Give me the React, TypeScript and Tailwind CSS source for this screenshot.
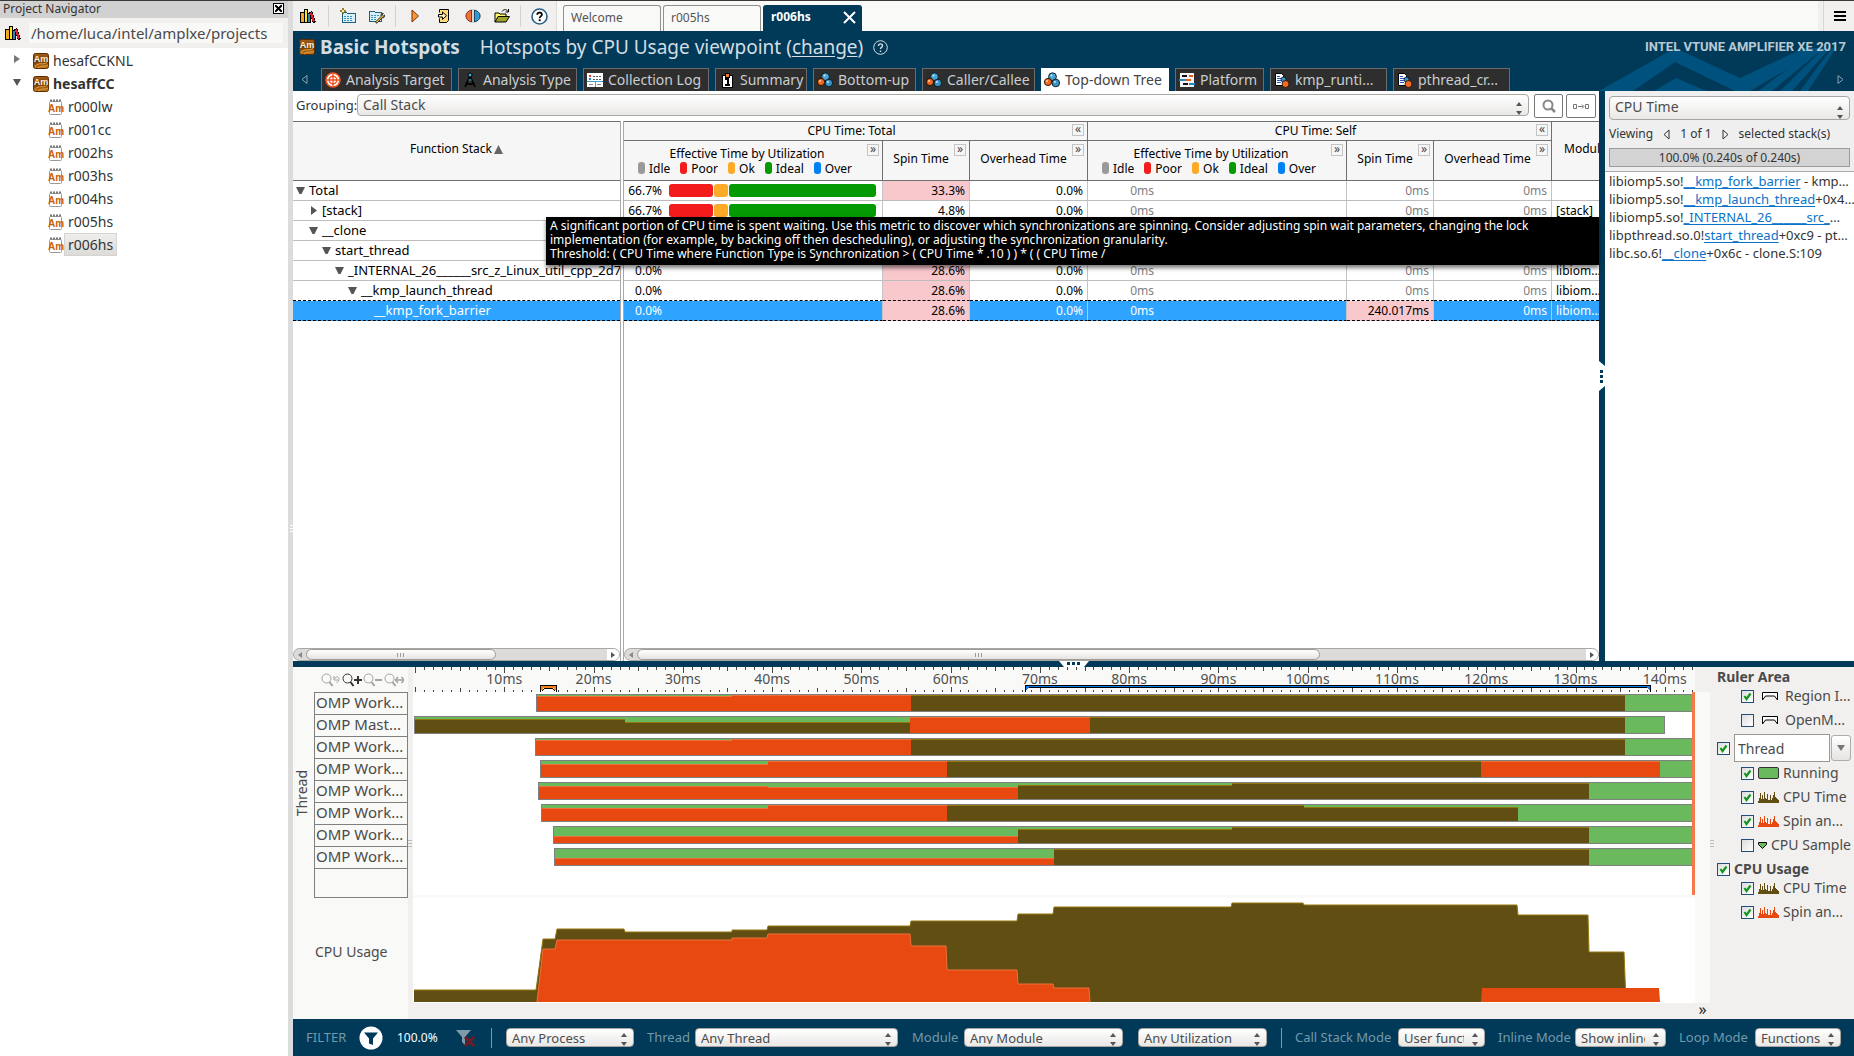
import React from "react";

/* ---------- icons ---------- */

function BooksIcon() {
  return (
    <svg className="h-4 w-4 shrink-0" viewBox="0 0 16 16" shapeRendering="crispEdges" aria-hidden="true">
      <rect x="0" y="4" width="5" height="11" fill="#000" />
      <rect x="1" y="5" width="3" height="9" fill="#f5a623" />
      <rect x="4" y="1" width="4" height="14" fill="#000" />
      <rect x="5" y="2" width="2" height="12" fill="#f8e71c" />
      <rect x="7" y="5" width="4" height="10" fill="#000" />
      <rect x="8" y="6" width="2" height="8" fill="#2f86b4" />
      <polygon points="9,4 12,3 16,14 13,15" fill="#000" />
      <polygon points="10,5 12,4 15,13 13,14" fill="#e0202a" />
    </svg>
  );
}

function NewProjectIcon() {
  return (
    <svg className="h-4 w-4" viewBox="0 0 16 16" shapeRendering="crispEdges" aria-hidden="true">
      <path d="M2.5 4.5h4l1 1h8v9h-13z" fill="#d9f0f8" stroke="#1f5f7d" />
      <path d="M4 8h9M4 10h9M4 12h9" stroke="#3d93b5" strokeDasharray="2 1" />
      <path d="M3 0l1 2 2 1-2 1-1 2-1-2-2-1 2-1z" fill="#ffe98a" stroke="#6b5200" strokeWidth="0.7" />
    </svg>
  );
}

function ProjectPropsIcon() {
  return (
    <svg className="h-4 w-4" viewBox="0 0 16 16" aria-hidden="true">
      <path d="M.5 3.5h5l1 1h6v9H.5z" fill="#d9f0f8" stroke="#1f5f7d" shapeRendering="crispEdges" />
      <path d="M2 7h8M2 9h6M2 11h5" stroke="#3d93b5" strokeDasharray="2 1" shapeRendering="crispEdges" />
      <path d="M7 13.5l5-5c-.6-2 .8-3.300 2.300-3l-1.500 1.700 1.200 1.200 1.600-1.300c.5 1.800-.8 3.100-2.600 2.700l-4.700 5c-1 .8-2-.4-1.300-1.300z" fill="#ffc94d" stroke="#1a1200" strokeWidth="0.9" />
    </svg>
  );
}

function PlayIcon() {
  return (
    <svg className="h-4 w-4" viewBox="0 0 16 16" aria-hidden="true">
      <path d="M5 2v12l6.500-6z" fill="#f39a3b" stroke="#7a2c00" />
    </svg>
  );
}

function AttachIcon() {
  return (
    <svg className="h-4 w-4" viewBox="0 0 16 16" aria-hidden="true">
      <path d="M3.500 4.500v-3h9v11l-2 2h-7v-4" fill="#ffd977" stroke="#000" />
      <path d="M2.500 6.500h4v-2.500l4 3.700-4 3.700V9h-4z" fill="#fff3c4" stroke="#000" />
    </svg>
  );
}

function CompareIcon() {
  return (
    <svg className="h-4 w-4" viewBox="0 0 16 16" aria-hidden="true">
      <path d="M6.500 2v12C-1 12-1 4 6.500 2z" fill="#f0703a" stroke="#5d1c00" strokeWidth="0.8" />
      <path d="M9.500 2v12c7.500-2 7.500-10 0-12z" fill="#2e9bd6" stroke="#00263d" strokeWidth="0.8" />
      <path d="M8 1v14" stroke="#999" strokeWidth="0.600" />
    </svg>
  );
}

function OpenFolderIcon() {
  return (
    <svg className="h-4 w-4" viewBox="0 0 16 16" aria-hidden="true">
      <path d="M1 14V5h4l1 1h6v3" fill="#fff86e" stroke="#000" />
      <path d="M1 14l3-5.500h11.500L12 14z" fill="#a2a42a" stroke="#000" />
      <path d="M8 3.500c2-3 5-2 6 0M14.500 1v3h-3" fill="none" stroke="#000" />
    </svg>
  );
}

function HelpIcon() {
  return (
    <svg className="h-[17px] w-[17px]" viewBox="0 0 17 17" aria-hidden="true">
      <circle cx="8.500" cy="8.500" r="7.500" fill="#fff" stroke="#2a6086" strokeWidth="1.600" />
      <path d="M6.200 6.800c0-3 4.700-3 4.700-.2 0 1.800-2.300 1.800-2.300 3.600" fill="none" stroke="#000" strokeWidth="1.800" />
      <rect x="7.700" y="11.300" width="1.900" height="1.900" fill="#000" />
    </svg>
  );
}

function AmIcon() {
  return (
    <svg className="h-4 w-4 shrink-0" viewBox="0 0 16 16" aria-hidden="true">
      <defs>
        <linearGradient id="am" x1="0" y1="0" x2="0" y2="1">
          <stop offset="0" stopColor="#a8601c" />
          <stop offset="0.5" stopColor="#6a3606" />
          <stop offset="1" stopColor="#c87f20" />
        </linearGradient>
      </defs>
      <rect x="0.500" y="0.500" width="15" height="15" rx="2" fill="url(#am)" stroke="#5a2c02" />
      <path d="M2 13.500c4-5 8-1 12-4M5 15c3-3 6-1 10-3" fill="none" stroke="#f0a83c" strokeWidth="0.900" />
      <text x="8" y="8.500" textAnchor="middle" fontSize="9" fontWeight="700" fontFamily="Liberation Sans, sans-serif" fill="#fff1dc">Am</text>
    </svg>
  );
}

function ResultIcon() {
  return (
    <svg className="h-4 w-4 shrink-0" viewBox="0 0 16 16" aria-hidden="true">
      <rect x="1.500" y="2.500" width="12" height="13" rx="1" fill="#fff" stroke="#9a9a9a" />
      <path d="M2 1.500h12" stroke="#777" strokeWidth="2" strokeDasharray="2 1" />
      <text x="8" y="12.500" textAnchor="middle" fontSize="10" fontWeight="700" fontFamily="Liberation Sans, sans-serif" fill="#c8620a">Am</text>
    </svg>
  );
}

type TabKind = "target" | "compass" | "log" | "info" | "balls" | "platform" | "doc";

function TabIcon({ kind }: { kind: TabKind }) {
  return (
    <svg className="h-4 w-4 shrink-0" viewBox="0 0 16 16" aria-hidden="true">
      {kind === "target" && (
        <>
          <circle cx="8" cy="8" r="7" fill="#fff" stroke="#f0501e" strokeWidth="1.600" />
          <circle cx="8" cy="8" r="3.800" fill="none" stroke="#f0501e" strokeWidth="1.400" />
          <path d="M8 2v12M2 8h12" stroke="#f0501e" strokeWidth="1.300" />
        </>
      )}
      {kind === "compass" && (
        <>
          <path d="M7.500 5L3 15M8.500 5L13 15M3.500 11c3 1.500 6 1.500 9 0" fill="none" stroke="#000" strokeWidth="1.600" />
          <circle cx="8" cy="3" r="2" fill="#3aa7e0" stroke="#000" />
          <path d="M6.500 8h3" stroke="#3aa7e0" />
        </>
      )}
      {kind === "log" && (
        <g shapeRendering="crispEdges">
          <rect x="0" y="1" width="16" height="14" fill="#fff" />
          <path d="M0 9.500h16M8 9v6" stroke="#3f9fd6" />
          <rect x="2" y="3" width="2" height="2" fill="#e04020" />
          <rect x="2" y="6" width="2" height="2" fill="#2b7fc0" />
          <path d="M6 4.500h8M6 7.500h8" stroke="#555" strokeDasharray="2 1" />
          <path d="M2 12.500h4M10 12.500h4" stroke="#888" />
        </g>
      )}
      {kind === "info" && (
        <g shapeRendering="crispEdges">
          <rect x="3" y="3" width="10" height="12" fill="#fff" stroke="#000" />
          <rect x="6" y="1" width="4" height="4" fill="#f47a2a" stroke="#000" />
          <path d="M6 7h3v5M6 12.500h5" fill="none" stroke="#000" strokeWidth="2" />
        </g>
      )}
      {kind === "balls" && (
        <>
          <circle cx="8.500" cy="4.700" r="3.900" fill="#4aa3d0" stroke="#00121c" strokeWidth="0.900" />
          <circle cx="4" cy="10" r="3.600" fill="#f26a21" stroke="#1c0a00" strokeWidth="0.900" />
          <circle cx="11.800" cy="11" r="3.800" fill="#3b92c4" stroke="#00121c" strokeWidth="0.900" />
          <circle cx="3" cy="9" r="1" fill="#ffd3a8" />
          <circle cx="7.500" cy="3.600" r="1" fill="#c9ecff" />
          <circle cx="10.900" cy="10" r="1" fill="#c9ecff" />
        </>
      )}
      {kind === "platform" && (
        <g shapeRendering="crispEdges">
          <rect x="1" y="1" width="14" height="14" fill="#f3f3f3" />
          <rect x="3" y="3" width="5" height="2" fill="#111" />
          <rect x="10" y="3" width="4" height="2" fill="#e8591c" />
          <rect x="0" y="7" width="6" height="2" fill="#2484c0" />
          <rect x="6" y="7" width="6" height="2" fill="#e8591c" />
          <rect x="4" y="11" width="5" height="2" fill="#111" />
          <rect x="10" y="11" width="6" height="2" fill="#2484c0" />
        </g>
      )}
      {kind === "doc" && (
        <>
          <path d="M1.500 1.500h6l2 2v10h-8z" fill="#fff" stroke="#000" />
          <path d="M3 4.500h3M3 6.500h5M3 8.500h4M3 10.500h4" stroke="#2b57c8" />
          <circle cx="9.500" cy="7.500" r="2.500" fill="#3b92c4" stroke="#000" strokeWidth="0.700" />
          <circle cx="11.500" cy="12" r="3.500" fill="#f26a21" stroke="#1c0a00" strokeWidth="0.800" />
        </>
      )}
    </svg>
  );
}

function Magnifier({ mark, dim }: { mark: "undo" | "plus" | "minus" | "fit"; dim?: boolean }) {
  const c = dim ? "#a3a3a3" : "#333";
  return (
    <svg className="h-4 w-5" viewBox="0 0 20 16" fill="none" stroke={c} aria-hidden="true">
      <circle cx="5.500" cy="6.500" r="4.500" />
      <path d="M8.500 10l3 4" strokeWidth="2" />
      {mark === "undo" && <path d="M13 4v4h4M13.500 7c2-4 6-2 4 2l-2 2" />}
      {mark === "plus" && <path d="M12 8h8M16 4v8" strokeWidth="2" />}
      {mark === "minus" && <path d="M12 8h7" strokeWidth="2" />}
      {mark === "fit" && <path d="M12 8h8M14 5l-2.500 3 2.500 3M17.500 5l2.500 3-2.500 3" strokeWidth="1.500" />}
    </svg>
  );
}

function TreeArrow({ open }: { open: boolean }) {
  return (
    <svg className="h-[9px] w-[9px] shrink-0" viewBox="0 0 9 9" aria-hidden="true">
      {open ? <path d="M0 1h9L5.500 8h-2z" fill="#555" /> : <path d="M2 0l6 4.500L2 9z" fill="#555" />}
    </svg>
  );
}

/* ---------- controls ---------- */

function Select({ label, value, className, size = "text-[13px]" }: { label: string; value: string; className: string; size?: string }) {
  return (
    <span className={"relative block shrink-0 " + className}>
      <select
        aria-label={label}
        className={
          "block h-full w-full appearance-none overflow-hidden rounded-[4px] border border-[#a9a6a2] bg-linear-to-b from-white to-[#e9e8e6] pb-0.5 pl-[5px] pr-5 text-[#4c4c4c] " +
          size
        }
      >
        <option>{value}</option>
      </select>
      <svg className="pointer-events-none absolute bottom-0 right-1.5 h-4 w-2" viewBox="0 0 8 16" fill="#555" aria-hidden="true">
        <path d="M1 6l3-4 3 4zM1 11h6l-3 4z" />
      </svg>
    </span>
  );
}

function Check({ id, checked, label }: { id: string; checked?: boolean; label?: string }) {
  return (
    <span className="relative block h-[13px] w-[13px] shrink-0">
      <input
        id={id}
        type="checkbox"
        defaultChecked={checked}
        aria-label={label}
        className="peer block h-full w-full appearance-none border border-[#1f4f7a] bg-linear-to-br from-[#dcdcdc] to-white"
      />
      <svg className="pointer-events-none absolute inset-0 hidden h-full w-full peer-checked:block" viewBox="0 0 13 13" aria-hidden="true">
        <path d="M3.500 6l2 3 4-5.500" fill="none" stroke="#12961c" strokeWidth="2.200" />
      </svg>
    </span>
  );
}

/* ---------- project navigator ---------- */

const RESULTS = ["r000lw", "r001cc", "r002hs", "r003hs", "r004hs", "r005hs", "r006hs"];

function ProjectNavigator() {
  return (
    <aside className="w-72 shrink-0 bg-white text-[#333]">
      <div className="flex h-[17px] items-center justify-between bg-[#d1d1d1] pl-[3px] pr-1 text-xs">
        <h2 className="pb-0.5">Project Navigator</h2>
        <button type="button" aria-label="Close" className="mb-0.5 flex h-[11px] w-[11px] items-center justify-center border border-black bg-white">
          <svg className="h-[7px] w-[7px]" viewBox="0 0 7 7" stroke="#000" strokeWidth="2" aria-hidden="true">
            <path d="M0 0l7 7M7 0L0 7" />
          </svg>
        </button>
      </div>
      <div className="flex h-[30px] items-center gap-2 bg-[#f1f0ee] pl-[5px] pr-[5px]">
        <BooksIcon />
        <span className="h-5 flex-1 bg-[#f8f8f7] pl-[2px] text-[15px] leading-5 text-[#4a4a4a]">/home/luca/intel/amplxe/projects</span>
      </div>
      <ul className="pt-px text-sm">
        <li className="flex h-[23px] items-center pl-[13px]">
          <svg className="mb-1 h-2 w-2" viewBox="0 0 8 8" aria-hidden="true">
            <path d="M1 0l6 4-6 4z" fill="#777" />
          </svg>
          <span className="ml-3 flex items-center gap-1"><AmIcon />hesafCCKNL</span>
        </li>
        <li className="flex h-[23px] items-center pl-[13px] font-bold">
          <svg className="mb-1 h-2 w-2" viewBox="0 0 8 8" aria-hidden="true">
            <path d="M0 1h8L4 8z" fill="#555" />
          </svg>
          <span className="ml-3 flex items-center gap-1"><AmIcon />hesaffCC</span>
        </li>
        {RESULTS.map((r) => (
          <li key={r} className="flex h-[23px] items-center pl-12">
            <ResultIcon />
            <span
              className={
                r === "r006hs"
                  ? "flex h-[23px] items-center border border-[#d6d4d1] bg-linear-to-b from-[#efeeec] to-[#dddbd7] px-[3px]"
                  : "px-1"
              }
            >
              {r}
            </span>
          </li>
        ))}
      </ul>
    </aside>
  );
}

/* ---------- header ---------- */

function Sep() {
  return <span className="h-[22px] w-px bg-[#d4d2cf]" />;
}

function ToolButton({ label, children }: { label: string; children: React.ReactNode }) {
  return (
    <button type="button" aria-label={label} className="flex w-[29px] items-center justify-center">
      {children}
    </button>
  );
}

function TopBar() {
  return (
    <div className="flex h-[30px] bg-[#f9f9f8]">
      <div className="flex w-[264px] shrink-0 items-center border-r border-[#dedcd9] bg-[#f1f0ee]">
        <ToolButton label="Projects"><BooksIcon /></ToolButton>
        <span className="w-1.5" />
        <Sep />
        <span className="w-1" />
        <ToolButton label="New project"><NewProjectIcon /></ToolButton>
        <ToolButton label="Project properties"><ProjectPropsIcon /></ToolButton>
        <span className="w-1" />
        <Sep />
        <span className="w-1" />
        <ToolButton label="Start"><PlayIcon /></ToolButton>
        <ToolButton label="Attach"><AttachIcon /></ToolButton>
        <ToolButton label="Compare"><CompareIcon /></ToolButton>
        <ToolButton label="Open"><OpenFolderIcon /></ToolButton>
        <span className="w-1" />
        <Sep />
        <span className="w-1" />
        <ToolButton label="Help"><HelpIcon /></ToolButton>
      </div>
      <nav className="flex items-end gap-0.5 pl-1.5 text-xs text-[#555]">
        <a href="#welcome" className="flex h-[26px] w-[98px] items-center rounded-t-[3px] border border-b-0 border-[#8f8f8f] pb-0.5 pl-[7px]">Welcome</a>
        <a href="#r005hs" className="flex h-[26px] w-[98px] items-center rounded-t-[3px] border border-b-0 border-[#8f8f8f] pb-0.5 pl-[7px]">r005hs</a>
        <a href="#r006hs" className="flex h-[26px] w-[99px] items-center justify-between rounded-t-[3px] bg-[#003a58] pb-0.5 pl-2 pr-1.5 font-bold text-white">
          r006hs
          <svg className="h-[13px] w-[13px]" viewBox="0 0 13 13" stroke="#fff" strokeWidth="2" aria-hidden="true">
            <path d="M1 1l11 11M12 1L1 12" />
          </svg>
        </a>
      </nav>
      <span className="flex-1" />
      <div className="flex w-9 items-center justify-between bg-[#f1f0ee] pl-[5px] pr-2">
        <span className="h-full w-px bg-[#d9d7d4]" />
        <button type="button" aria-label="Menu" className="flex w-3 flex-col gap-[2px]">
          <span className="h-[2px] bg-black" />
          <span className="h-[2px] bg-black" />
          <span className="h-[2px] bg-black" />
        </button>
      </div>
    </div>
  );
}

const VIEW_TABS: { label: string; kind: TabKind; width: string; active?: boolean }[] = [
  { label: "Analysis Target", kind: "target", width: "w-[131px]" },
  { label: "Analysis Type", kind: "compass", width: "w-[119px]" },
  { label: "Collection Log", kind: "log", width: "w-[126px]" },
  { label: "Summary", kind: "info", width: "w-[92px]" },
  { label: "Bottom-up", kind: "balls", width: "w-[103px]" },
  { label: "Caller/Callee", kind: "balls", width: "w-[113px]" },
  { label: "Top-down Tree", kind: "balls", width: "w-[128px]", active: true },
  { label: "Platform", kind: "platform", width: "w-[89px]" },
  { label: "kmp_runti...", kind: "doc", width: "w-[117px]" },
  { label: "pthread_cr...", kind: "doc", width: "w-[117px]" },
];

function Banner() {
  return (
    <header className="relative overflow-hidden bg-[#003a58]">
      <svg className="absolute bottom-0 right-0 h-[46px] w-[256px]" viewBox="0 0 256 46" fill="#00517d" aria-hidden="true">
        <path d="M1 46L77 3l65 30 64-30h20L152 46h-15L77 17 35 46z" />
        <path d="M56 46l22-13 31 13z" />
        <path d="M160 46l58-43h8l-52 43zM182 46l44-43h6l-38 43zM202 46l32-43h4l-28 43z" />
      </svg>
      <div className="relative mb-[5px] flex h-8 items-center pl-1.5 pr-2 text-[19px] text-[#d4dde3]">
        <AmIcon />
        <h1 className="ml-[5px] font-bold leading-8">Basic Hotspots</h1>
        <p className="ml-5 leading-8">
          Hotspots by CPU Usage viewpoint (<a href="#change" className="underline underline-offset-2">change</a>)
        </p>
        <svg className="ml-2.5 h-[15px] w-[15px]" viewBox="0 0 15 15" fill="none" stroke="#d4dde3" aria-hidden="true">
          <circle cx="7.500" cy="7.500" r="6.800" />
          <path d="M5.500 6c0-2.800 4-2.800 4-.2 0 1.500-2 1.600-2 3.200M7.500 10.500v1.500" strokeWidth="1.400" />
        </svg>
        <span className="flex-1" />
        <span className="whitespace-nowrap font-['Roboto',sans-serif] text-[13px] font-bold text-[#b9c9d3]">INTEL VTUNE AMPLIFIER XE 2017</span>
      </div>
      <div className="relative flex h-[23px] items-stretch gap-1.5 text-sm text-[#c9cdd0]">
        <button type="button" aria-label="Scroll tabs left" className="flex w-[22px] items-center justify-center">
          <svg className="h-[9px] w-[7px]" viewBox="0 0 7 9" fill="none" stroke="#8ca1ae" aria-hidden="true"><path d="M6 .5v8l-5-4z" /></svg>
        </button>
        {VIEW_TABS.map((t) => (
          <a
            key={t.label}
            href={"#" + t.label}
            className={
              "flex shrink-0 items-center gap-[5px] whitespace-nowrap pl-[3px] leading-5 " +
              t.width +
              (t.active ? " bg-white text-[#444]" : " border border-b-0 border-[#6b6b6b] bg-[#2e2e2e]")
            }
          >
            <TabIcon kind={t.kind} />
            {t.label}
          </a>
        ))}
        <span className="flex-1" />
        <button type="button" aria-label="Scroll tabs right" className="mr-2 flex w-3 items-center justify-center">
          <svg className="h-[9px] w-[7px]" viewBox="0 0 7 9" fill="none" stroke="#8ca1ae" aria-hidden="true"><path d="M1 .5v8l5-4z" /></svg>
        </button>
      </div>
    </header>
  );
}

/* ---------- hotspot grid ---------- */

type Row = {
  name: string;
  depth: number;
  open?: boolean;
  total?: string;
  bars?: boolean;
  spin?: string;
  hot?: boolean;
  self?: string;
  selfSpin?: string;
  module?: string;
  selected?: boolean;
  covered?: boolean;
};

const ROWS: Row[] = [
  { name: "Total", depth: 0, open: true, total: "66.7%", bars: true, spin: "33.3%", hot: true, module: "" },
  { name: "[stack]", depth: 1, open: false, total: "66.7%", bars: true, spin: "4.8%", module: "[stack]" },
  { name: "__clone", depth: 1, open: true, covered: true },
  { name: "start_thread", depth: 2, open: true, covered: true },
  { name: "_INTERNAL_26______src_z_Linux_util_cpp_2d7", depth: 3, open: true, total: "0.0%", spin: "28.6%", hot: true, module: "libiom..." },
  { name: "__kmp_launch_thread", depth: 4, open: true, total: "0.0%", spin: "28.6%", hot: true, module: "libiom..." },
  { name: "__kmp_fork_barrier", depth: 5, total: "0.0%", spin: "28.6%", hot: true, selfSpin: "240.017ms", module: "libiom...", selected: true },
];

function rowLine(i: number) {
  return i >= 5 ? " border-b [border-bottom-style:dashed] border-b-black" : " border-b border-b-[#bdbdbd]";
}

function Expand({ sign, className }: { sign: string; className: string }) {
  return (
    <button
      type="button"
      aria-label="Toggle columns"
      className={"absolute right-[3px] flex h-3 w-3 items-center justify-center border border-[#c4c4c4] text-xs leading-none text-[#444] " + className}
    >
      <span className="-mt-0.5">{sign}</span>
    </button>
  );
}

const LEGEND = [
  { label: "Idle", color: "bg-[#9a9a9a]" },
  { label: "Poor", color: "bg-[#f21c1c]" },
  { label: "Ok", color: "bg-[#fbab25]" },
  { label: "Ideal", color: "bg-[#049a04]" },
  { label: "Over", color: "bg-[#0080f5]" },
];

function UtilizationHead() {
  return (
    <th className="relative border-b border-r border-[#6f6f6f] p-0 pr-3 font-normal">
      <div className="leading-[15px]">Effective Time by Utilization</div>
      <div className="flex justify-center gap-2.5 pr-1 leading-[15px]">
        {LEGEND.map((l) => (
          <span key={l.label} className="flex items-center gap-1">
            <span className={"h-3 w-[7px] rounded-[3px] " + l.color} />
            {l.label}
          </span>
        ))}
      </div>
      <Expand sign="»" className="top-[3px]" />
    </th>
  );
}

function PlainHead({ label }: { label: string }) {
  return (
    <th className="relative border-b border-r border-[#6f6f6f] p-0 pb-1 pr-2.5 font-normal">
      {label}
      <Expand sign="»" className="top-[3px]" />
    </th>
  );
}

function ScrollBar({ thumb }: { thumb: string }) {
  return (
    <div className="mt-auto flex h-[13px] w-full rounded-full border border-[#aaa7a3] bg-[#dcdbda]">
      <button type="button" aria-label="Scroll left" className="flex w-3 items-center justify-center">
        <svg className="h-[6px] w-1" viewBox="0 0 4 6" aria-hidden="true"><path d="M4 0v6L0 3z" fill="#888" /></svg>
      </button>
      <div className="flex flex-1">
        <div className={"flex items-center justify-center gap-[2px] rounded-full border border-[#9e9b97] bg-linear-to-b from-white to-[#e6e4e2] " + thumb}>
          <span className="h-1 w-px bg-[#999]" />
          <span className="h-1 w-px bg-[#999]" />
          <span className="h-1 w-px bg-[#999]" />
        </div>
      </div>
      <button type="button" aria-label="Scroll right" className="flex w-3 items-center justify-center rounded-r-full bg-white">
        <svg className="h-[6px] w-1" viewBox="0 0 4 6" aria-hidden="true"><path d="M0 0v6l4-3z" fill="#555" /></svg>
      </button>
    </div>
  );
}

function FunctionPane() {
  return (
    <div className="flex w-[328px] shrink-0 flex-col overflow-hidden border-r border-[#a8a8a8]">
      <table className="w-full table-fixed border-separate border-spacing-0 text-[13px]">
        <thead>
          <tr className="h-[60px] bg-[#f6f6f6]">
            <th className="border-y border-[#6f6f6f] p-0 pb-1 text-xs font-normal">
              <span className="inline-flex items-center gap-0.5">
                Function Stack
                <svg className="h-[9px] w-[9px]" viewBox="0 0 9 9" aria-hidden="true"><path d="M4.500 0L9 9H0z" fill="#666" /></svg>
              </span>
            </th>
          </tr>
        </thead>
        <tbody>
          {ROWS.map((r, i) => (
            <tr key={r.name} className={r.selected ? "h-5 bg-[#2ea3ff] text-white" : "h-5"}>
              <td className={"overflow-hidden p-0" + rowLine(i)}>
                <div className="flex h-[19px] items-center gap-1 whitespace-nowrap leading-[19px]" style={{ paddingLeft: 3 + r.depth * 13 }}>
                  {r.open === undefined ? <span className="w-[9px] shrink-0" /> : <TreeArrow open={r.open} />}
                  {r.name}
                </div>
              </td>
            </tr>
          ))}
        </tbody>
      </table>
      <ScrollBar thumb="w-[63%]" />
    </div>
  );
}

function MetricsPane() {
  return (
    <div className="flex min-w-0 flex-1 flex-col overflow-hidden border-l border-[#a8a8a8]">
      <table className="w-full table-fixed border-separate border-spacing-0 text-xs">
        <colgroup>
          <col className="w-[259px]" />
          <col className="w-[87px]" />
          <col className="w-[118px]" />
          <col className="w-[259px]" />
          <col className="w-[87px]" />
          <col className="w-[118px]" />
          <col />
        </colgroup>
        <thead className="bg-[#f6f6f6]">
          <tr className="h-5">
            <th colSpan={3} className="relative border-b border-r border-t border-[#6f6f6f] p-0 pr-2 font-normal leading-4">
              CPU Time: Total
              <Expand sign="«" className="top-[2px]" />
            </th>
            <th colSpan={3} className="relative border-b border-r border-t border-[#6f6f6f] p-0 pr-2 font-normal leading-4">
              CPU Time: Self
              <Expand sign="«" className="top-[2px]" />
            </th>
            <th rowSpan={2} className="overflow-hidden border-y border-[#6f6f6f] p-0 pb-1 pl-3 text-left font-normal">Module</th>
          </tr>
          <tr className="h-10">
            <UtilizationHead />
            <PlainHead label="Spin Time" />
            <PlainHead label="Overhead Time" />
            <UtilizationHead />
            <PlainHead label="Spin Time" />
            <PlainHead label="Overhead Time" />
          </tr>
        </thead>
        <tbody>
          {ROWS.map((r, i) => {
            const line = rowLine(i);
            const cell = "h-5 p-0 text-right leading-[19px] border-r border-r-[#c4c4c4]" + line;
            const dim = r.selected ? "" : " text-[#808080]";
            return (
              <tr key={r.name} className={r.selected ? "bg-[#2ea3ff] text-white" : ""}>
                <td className={cell}>
                  <div className="flex h-[19px] items-center gap-[7px]">
                    <span className="w-[38px]">{r.total}</span>
                    {r.bars && (
                      <span className="flex h-[13px] w-[207px] gap-px">
                        <span className="w-11 rounded-[3px] bg-[#f21c1c]" />
                        <span className="w-3.5 rounded-[3px] bg-[#fbab25]" />
                        <span className="flex-1 rounded-[3px] bg-[#049a04]" />
                      </span>
                    )}
                  </div>
                </td>
                <td className={cell + " pr-1" + (r.hot ? " bg-[#f8c8cd] text-black" : "")}>{r.spin}</td>
                <td className={cell + " pr-1"}>{r.covered ? "" : "0.0%"}</td>
                <td className={cell + dim}><div className="w-[66px]">{r.covered ? "" : "0ms"}</div></td>
                <td className={cell + " pr-1" + (r.selfSpin ? " bg-[#f8c8cd] text-black" : dim)}>{r.covered ? "" : r.selfSpin || "0ms"}</td>
                <td className={cell + " pr-1" + dim}>{r.covered ? "" : "0ms"}</td>
                <td className={"overflow-hidden whitespace-nowrap p-0 pl-1 leading-[19px]" + line}>{r.module}</td>
              </tr>
            );
          })}
        </tbody>
      </table>
      <ScrollBar thumb="w-[72%]" />
    </div>
  );
}

function Grid() {
  return (
    <main className="relative flex min-w-0 flex-1 flex-col bg-white text-black">
      <div className="flex h-[30px] items-center pl-[3px] pr-[3px]">
        <span className="w-[61px] text-[13px] text-[#333]">Grouping:</span>
        <Select label="Grouping" value="Call Stack" className="mb-0.5 h-[22px] flex-1" size="text-sm" />
        <button type="button" aria-label="Search" className="ml-[5px] flex h-6 w-[29px] items-center justify-center rounded-[2px] border border-[#777]">
          <svg className="h-[14px] w-[14px]" viewBox="0 0 14 14" fill="none" stroke="#888" strokeWidth="2" aria-hidden="true">
            <circle cx="6" cy="6" r="4.500" /><path d="M9 9l4 4" strokeWidth="2.500" />
          </svg>
        </button>
        <button type="button" aria-label="Fit columns" className="ml-[3px] flex h-6 w-[30px] items-center justify-center rounded-[2px] border border-[#777]">
          <svg className="h-[7px] w-4" viewBox="0 0 16 7" fill="none" stroke="#777" aria-hidden="true">
            <path d="M.5 1.500h3v4h-3zM12.500 1.500h3v4h-3zM5 3.500h5M9 1.500l2 2-2 2" />
          </svg>
        </button>
      </div>
      <div className="flex min-h-0 flex-1 gap-[2px]">
        <FunctionPane />
        <MetricsPane />
      </div>
      <div role="tooltip" className="absolute left-[253px] right-0 top-[126px] overflow-hidden whitespace-nowrap bg-black pb-1 pl-1 pt-[2px] text-xs leading-[14px] text-white shadow-[0_3px_4px_rgba(0,0,0,0.5)]">
        A significant portion of CPU time is spent waiting. Use this metric to discover which synchronizations are spinning. Consider adjusting spin wait parameters, changing the lock
        <br />
        implementation (for example, by backing off then descheduling), or adjusting the synchronization granularity.
        <br />
        Threshold: ( CPU Time where Function Type is Synchronization &gt; ( CPU Time * .10 ) ) * ( ( CPU Time /
      </div>
    </main>
  );
}

/* ---------- stack panel ---------- */

const STACK = [
  { lib: "libiomp5.so!", fn: "__kmp_fork_barrier", rest: " - kmp…" },
  { lib: "libiomp5.so!", fn: "__kmp_launch_thread", rest: "+0x4…" },
  { lib: "libiomp5.so!", fn: "_INTERNAL_26______src_", rest: "…" },
  { lib: "libpthread.so.0!", fn: "start_thread", rest: "+0xc9 - pt…" },
  { lib: "libc.so.6!", fn: "__clone", rest: "+0x6c - clone.S:109" },
];

function StackPanel() {
  return (
    <aside className="w-[249px] shrink-0 bg-white text-[#333]">
      <div className="border-b border-[#a9a9a9] bg-[#efefef] px-1 pb-1 pt-[5px]">
        <Select label="Stack metric" value="CPU Time" className="h-6 w-full" size="text-sm" />
        <div className="flex h-7 items-center text-xs">
          Viewing
          <svg className="ml-2.5 h-[11px] w-[7px]" viewBox="0 0 7 11" fill="none" stroke="#333" aria-hidden="true"><path d="M6 1v9L1 5.500z" /></svg>
          <span className="mx-2.5">1 of 1</span>
          <svg className="h-[11px] w-[7px]" viewBox="0 0 7 11" fill="none" stroke="#333" aria-hidden="true"><path d="M1 1v9l5-4.500z" /></svg>
          <span className="ml-2.5">selected stack(s)</span>
        </div>
        <div className="flex h-[19px] items-center justify-center border border-[#9b9b9b] bg-[#d4d4d4] text-xs">100.0% (0.240s of 0.240s)</div>
      </div>
      <ul className="overflow-hidden whitespace-nowrap pl-1 text-[13px] leading-[18px]">
        {STACK.map((s) => (
          <li key={s.fn}>
            {s.lib}
            <a href={"#" + s.fn} className="text-[#0a72c8] underline underline-offset-2">{s.fn}</a>
            {s.rest}
          </li>
        ))}
      </ul>
    </aside>
  );
}

/* ---------- timeline ---------- */

const SPAN = 1282;
const MS = 8.927;
const ORANGE = "#e84910";
const BROWN = "#604e13";
const GREEN = "#6bb95d";

/* Each segment: end x, colour, gap above the fill. All x values are in chart units. */
type Seg = [number, string, number];
const THREADS: { name: string; start: number; end: number; segs: Seg[] }[] = [
  { name: "OMP Work...", start: 123, end: 1282, segs: [[319, ORANGE, 2], [498, ORANGE, 1], [1212, BROWN, 1]] },
  { name: "OMP Mast...", start: 1, end: 1252, segs: [[212, BROWN, 3], [497, BROWN, 6], [677, ORANGE, 1], [1212, BROWN, 1]] },
  { name: "OMP Work...", start: 122, end: 1282, segs: [[319, ORANGE, 2], [498, ORANGE, 1], [1212, BROWN, 1]] },
  { name: "OMP Work...", start: 127, end: 1282, segs: [[355, ORANGE, 4], [534, ORANGE, 1], [1068, BROWN, 1], [1247, ORANGE, 1]] },
  { name: "OMP Work...", start: 125, end: 1282, segs: [[355, ORANGE, 4], [605, ORANGE, 5], [819, BROWN, 3], [1176, BROWN, 1]] },
  { name: "OMP Work...", start: 128, end: 1282, segs: [[355, ORANGE, 4], [534, ORANGE, 1], [891, BROWN, 1], [1105, BROWN, 3]] },
  { name: "OMP Work...", start: 140, end: 1282, segs: [[605, ORANGE, 10], [819, BROWN, 3], [1176, BROWN, 1]] },
  { name: "OMP Work...", start: 141, end: 1282, segs: [[641, ORANGE, 10], [1176, BROWN, 1]] },
];

function ThreadTrack({ start, end, segs }: { start: number; end: number; segs: Seg[] }) {
  return (
    <svg className="block h-[22px] w-full" viewBox={"0 0 " + SPAN + " 22"} preserveAspectRatio="none" shapeRendering="crispEdges" aria-hidden="true">
      <rect x={start} y="2" width={end - start} height="18" fill="#808080" />
      <rect x={start + 1} y="3" width={end - start - 2 + (end === SPAN ? 2 : 0)} height="16" fill={GREEN} />
      {segs.map(([to, color, gap], i) => {
        const from = i === 0 ? start + 1 : segs[i - 1][0];
        return (
          <g key={to}>
            <rect x={from} y={2 + gap} width={to - from} height={17 - gap} fill={color} />
            <rect x={from} y={2 + gap} width={to - from} height="1" fill={color === ORANGE ? "#f0703c" : "#94770f"} />
          </g>
        );
      })}
    </svg>
  );
}

function Ruler() {
  const ticks = Array.from({ length: 144 }, (_, i) => i);
  return (
    <div className="relative h-[25px] w-full bg-[#f9f9f8] text-[#4f4f4f]">
      <svg className="absolute inset-0 h-full w-full" viewBox={"0 0 " + SPAN + " 25"} preserveAspectRatio="none" shapeRendering="crispEdges" aria-hidden="true">
        {ticks.map((t) => {
          const len = t % 10 === 0 ? 6 : t % 5 === 0 ? 4 : 3;
          const x = Math.round(2 + t * MS);
          return (
            <g key={t} fill="#444">
              <rect x={x} y="0" width="1" height={len} />
              <rect x={x} y={25 - (len === 6 ? 5 : len === 4 ? 4 : 2)} width="1" height="5" />
            </g>
          );
        })}
      </svg>
      {Array.from({ length: 14 }, (_, i) => (i + 1) * 10).map((t) => (
        <span
          key={t}
          className="absolute top-[2px] -translate-x-1/2 text-sm leading-5"
          style={{ left: ((2 + t * MS) / SPAN) * 100 + "%" }}
        >
          {t}ms
        </span>
      ))}
      <svg className="absolute inset-0 h-full w-full" viewBox={"0 0 " + SPAN + " 25"} preserveAspectRatio="none" shapeRendering="crispEdges" aria-hidden="true">
        <rect x="127" y="18" width="17" height="7" fill="#f9f9f8" />
        <path d="M127 18h17v7h-1v-6h-15v6h-1z" fill="#000" />
        <rect x="128" y="19" width="15" height="2" fill="#f5841f" />
        <path d="M128 21h2v2h-2zM141 21h2v2h-2z" fill="#f5841f" />
        <path d="M131 21h9v1h-9zM130 22h1v1h-1zM140 22h1v1h-1zM129 23h1v1h-1zM141 23h1v1h-1z" fill="#000" />
        <rect x="612" y="18" width="626" height="3" fill="#000" />
        <rect x="613" y="19" width="624" height="1" fill="#0f7cf0" />
        <rect x="612" y="18" width="1" height="7" fill="#000" />
        <rect x="1237" y="18" width="1" height="7" fill="#000" />
        <path d="M613 19h4l-4 5zM1237 19h-4l4 5z" fill="#0f7cf0" />
      </svg>
    </div>
  );
}

function UsageChart() {
  const cpu =
    "1,92 123,92 130,41 142,41 144,31 211,31 212,34 319,34 319,32 354,32 355,28 497,28 498,23 604,23 605,16 640,16 641,9 818,9 819,5 890,5 891,7 1104,7 1105,17 1175,17 1176,54 1211,54 1213,104";
  const spin =
    "124,104 130,51 142,51 144,42 319,42 319,40 354,40 355,36 497,36 498,48 533,48 534,72 604,72 605,86 640,86 641,90 676,90 677,104";
  return (
    <svg className="block h-[105px] w-full bg-white" viewBox={"0 0 " + SPAN + " 105"} preserveAspectRatio="none" role="img" aria-label="CPU usage over time">
      <polygon points={cpu + " 1,104"} fill={BROWN} />
      <polyline points={cpu} fill="none" stroke="#94770f" />
      <polygon points={spin} fill={ORANGE} />
      <polyline points={spin} fill="none" stroke="#f0703c" />
      <polygon points="1068,104 1069,90 1246,90 1247,104" fill={ORANGE} />
    </svg>
  );
}

function HistIcon({ color }: { color: string }) {
  return (
    <svg className="h-[11px] w-[21px]" viewBox="0 0 21 11" shapeRendering="crispEdges" fill={color} aria-hidden="true">
      <path d="M0 11V9h1V6h1V1h1v6h1V3h1v4h1V0h1v6h1V7h1V2h1v6h1V8h1V3h1v5h1V6h1V3h1V0h1v5h1V6h1V7h1v1h1v3z" />
    </svg>
  );
}

function RegionIcon() {
  return (
    <svg className="ml-1 h-2 w-4" viewBox="0 0 16 8" fill="#fff" stroke="#000" aria-hidden="true">
      <path d="M.5 8V.5h15V8l-3-4h-9z" />
    </svg>
  );
}

function LegendRow({ id, label, checked, icon, gap = "gap-1" }: { id: string; label: string; checked?: boolean; icon: React.ReactNode; gap?: string }) {
  return (
    <li className="flex h-6 items-center pl-[27px]">
      <Check id={id} checked={checked} />
      <label htmlFor={id} className={"ml-1 flex items-center whitespace-nowrap " + gap}>
        {icon}
        {label}
      </label>
    </li>
  );
}

function Legend() {
  return (
    <aside className="w-[140px] shrink-0 overflow-hidden text-sm leading-5 text-[#4a4a4a]">
      <h3 className="h-[17px] pl-[3px] font-bold">Ruler Area</h3>
      <ul>
        <LegendRow id="region" label="Region I..." checked icon={<RegionIcon />} gap="gap-[7px]" />
        <LegendRow id="openmp" label="OpenM..." icon={<RegionIcon />} gap="gap-[7px]" />
      </ul>
      <div className="mt-0.5 flex h-7 items-center pl-[3px]">
        <Check id="thread" checked label="Show thread tracks" />
        <input aria-label="Grouping level" defaultValue="Thread" className="ml-1 h-7 w-24 border border-[#9b9894] bg-white px-[3px] text-sm" />
        <button type="button" aria-label="Choose grouping level" className="ml-px flex h-[26px] w-5 items-center justify-center rounded-[3px] border border-[#b0ada9] bg-linear-to-b from-white to-[#e6e4e2]">
          <svg className="h-[6px] w-2" viewBox="0 0 8 6" aria-hidden="true"><path d="M0 0h8L4 6z" fill="#777" /></svg>
        </button>
      </div>
      <ul className="-mt-px">
        <LegendRow id="running" label="Running" checked icon={<span className="h-3 w-[21px] rounded-[2px] border border-[#333] bg-[#6bb95d]" />} />
        <LegendRow id="cpu" label="CPU Time" checked icon={<HistIcon color={BROWN} />} />
        <LegendRow id="spin" label="Spin an..." checked icon={<HistIcon color={ORANGE} />} />
        <LegendRow
          id="sample"
          label="CPU Sample"
          icon={
            <svg className="h-[7px] w-[9px]" viewBox="0 0 9 7" aria-hidden="true">
              <path d="M.5.5h8v2l-4 4-4-4z" fill="#6bb95d" stroke="#000" />
            </svg>
          }
        />
      </ul>
      <div className="flex h-6 items-center pl-[3px]">
        <Check id="usage" checked />
        <label htmlFor="usage" className="ml-1 font-bold">CPU Usage</label>
      </div>
      <ul className="-mt-[5px]">
        <LegendRow id="usage-cpu" label="CPU Time" checked icon={<HistIcon color={BROWN} />} />
        <LegendRow id="usage-spin" label="Spin an..." checked icon={<HistIcon color={ORANGE} />} />
      </ul>
    </aside>
  );
}

function Grip() {
  return (
    <div className="flex w-1 shrink-0 flex-col items-center justify-center gap-[2px] bg-[#f1f0ee]">
      <span className="h-px w-full bg-[#bbb]" />
      <span className="h-px w-full bg-[#bbb]" />
      <span className="h-px w-full bg-[#bbb]" />
    </div>
  );
}

function Timeline() {
  return (
    <section className="flex h-[352px] shrink-0 bg-[#f1f0ee] text-[#4a4a4a]">
      <div className="flex w-[115px] shrink-0 flex-col bg-[#f9f9f8]">
        <div className="flex h-[25px] items-center pl-7">
          <button type="button" aria-label="Undo zoom" className="w-[21px]"><Magnifier mark="undo" dim /></button>
          <button type="button" aria-label="Zoom in" className="w-[21px]"><Magnifier mark="plus" /></button>
          <button type="button" aria-label="Zoom out" className="w-[21px]"><Magnifier mark="minus" dim /></button>
          <button type="button" aria-label="Zoom to fit" className="w-[21px]"><Magnifier mark="fit" dim /></button>
        </div>
        <div className="flex h-[206px]">
          <div className="flex w-[21px] items-center justify-center pb-1 pr-1">
            <span className="rotate-180 text-sm [writing-mode:vertical-rl]">Thread</span>
          </div>
          <ul className="flex-1 border border-[#808080] text-[15px]">
            {THREADS.map((t, i) => (
              <li key={i} className="h-[22px] whitespace-nowrap border-b border-[#808080] pl-px leading-[19px]">{t.name}</li>
            ))}
          </ul>
        </div>
        <div className="flex flex-1 items-center pb-3.5 pl-[22px] text-sm">CPU Usage</div>
      </div>
      <Grip />
      <div className="flex min-w-0 flex-1 flex-col pl-px">
        <Ruler />
        <div className="relative h-[203px] bg-white">
          {THREADS.map((t, i) => (
            <ThreadTrack key={i} start={t.start} end={t.end} segs={t.segs} />
          ))}
          <span className="absolute inset-y-0 right-0 w-[3px] bg-[#f4794b]" />
        </div>
        <div className="h-[3px] bg-[#f9f9f8]" />
        <UsageChart />
      </div>
      <div className="flex w-[15px] shrink-0 flex-col">
        <div className="mt-[25px] flex-1 bg-[#f9f9f8]" />
        <button type="button" aria-label="More" className="flex h-4 items-center justify-center pb-1 text-base leading-none text-[#222]">»</button>
      </div>
      <Grip />
      <Legend />
    </section>
  );
}

/* ---------- filter bar ---------- */

function FilterBar() {
  return (
    <footer className="flex h-[37px] shrink-0 items-center bg-[#003a58] pl-[13px] text-[13px] text-[#7399ab]">
      <span className="w-[53px]">FILTER</span>
      <svg className="h-6 w-6" viewBox="0 0 24 24" aria-hidden="true">
        <circle cx="12" cy="12" r="11.500" fill="#fff" />
        <path d="M5 6.500h14l-5 6V19l-4-1.500v-5z" fill="#003a58" />
      </svg>
      <span className="ml-3.5 w-[59px] text-xs text-white">100.0%</span>
      <button type="button" aria-label="Clear filter" className="w-[35px]">
        <svg className="h-5 w-5" viewBox="0 0 20 20" aria-hidden="true">
          <path d="M0 2h15L9 9v8l-3-3V9z" fill="#7f9aa8" />
          <path d="M9 9l9 9M18 9l-9 9" stroke="#701c26" strokeWidth="3" />
        </svg>
      </button>
      <span className="h-5 w-px bg-[#7d97a6]" />
      <Select label="Process" value="Any Process" className="ml-3.5 h-[19px] w-32" />
      <label className="w-[61px] pl-[13px]">Thread</label>
      <Select label="Thread" value="Any Thread" className="h-[19px] w-[203px]" />
      <label className="w-[66px] pl-3.5">Module</label>
      <Select label="Module" value="Any Module" className="h-[19px] w-[159px]" />
      <Select label="Utilization" value="Any Utilization" className="ml-[15px] h-[19px] w-[129px]" />
      <span className="ml-3.5 h-5 w-px bg-[#7d97a6]" />
      <label className="w-[116px] whitespace-nowrap pl-[13px]">Call Stack Mode</label>
      <Select label="Call stack mode" value="User functions + 1" className="h-[19px] w-[87px]" />
      <label className="w-[90px] whitespace-nowrap pl-[13px]">Inline Mode</label>
      <Select label="Inline mode" value="Show inline functions" className="h-[19px] w-[91px]" />
      <label className="w-[89px] whitespace-nowrap pl-[13px]">Loop Mode</label>
      <Select label="Loop mode" value="Functions" className="h-[19px] w-[86px]" />
    </footer>
  );
}

/* ---------- page ---------- */

export default function App() {
  return (
    <div className="flex min-h-screen border-t border-[#3b3735] bg-white font-['Noto_Sans',sans-serif]">
      <ProjectNavigator />
      <div className="flex w-[5px] shrink-0 flex-col items-end justify-center gap-[2px] bg-[#dcdcdc]">
        <span className="h-px w-[3px] bg-white" />
        <span className="h-px w-[3px] bg-white" />
        <span className="h-px w-[3px] bg-white" />
      </div>
      <div className="flex min-w-0 flex-1 flex-col">
        <TopBar />
        <Banner />
        <div className="flex min-h-[400px] flex-1">
          <Grid />
          <div className="flex w-1.5 shrink-0 flex-col items-center justify-center bg-[#003a58]">
            <svg className="h-[30px] w-1.5" viewBox="0 0 6 30" aria-hidden="true">
              <path d="M0 0l6 5v20l-6 5z" fill="#fff" />
              <path d="M1 9h3v3H1zM1 14h3v3H1zM1 19h3v3H1z" fill="#003a58" />
            </svg>
          </div>
          <StackPanel />
        </div>
        <div className="flex h-1.5 shrink-0 items-center justify-center bg-[#003a58]">
          <svg className="h-1.5 w-[30px]" viewBox="0 0 30 6" aria-hidden="true">
            <path d="M0 0h30l-5 6H5z" fill="#fff" />
            <path d="M8 1h3v3H8zM13 1h3v3h-3zM18 1h3v3h-3z" fill="#003a58" />
          </svg>
        </div>
        <Timeline />
        <FilterBar />
      </div>
    </div>
  );
}
